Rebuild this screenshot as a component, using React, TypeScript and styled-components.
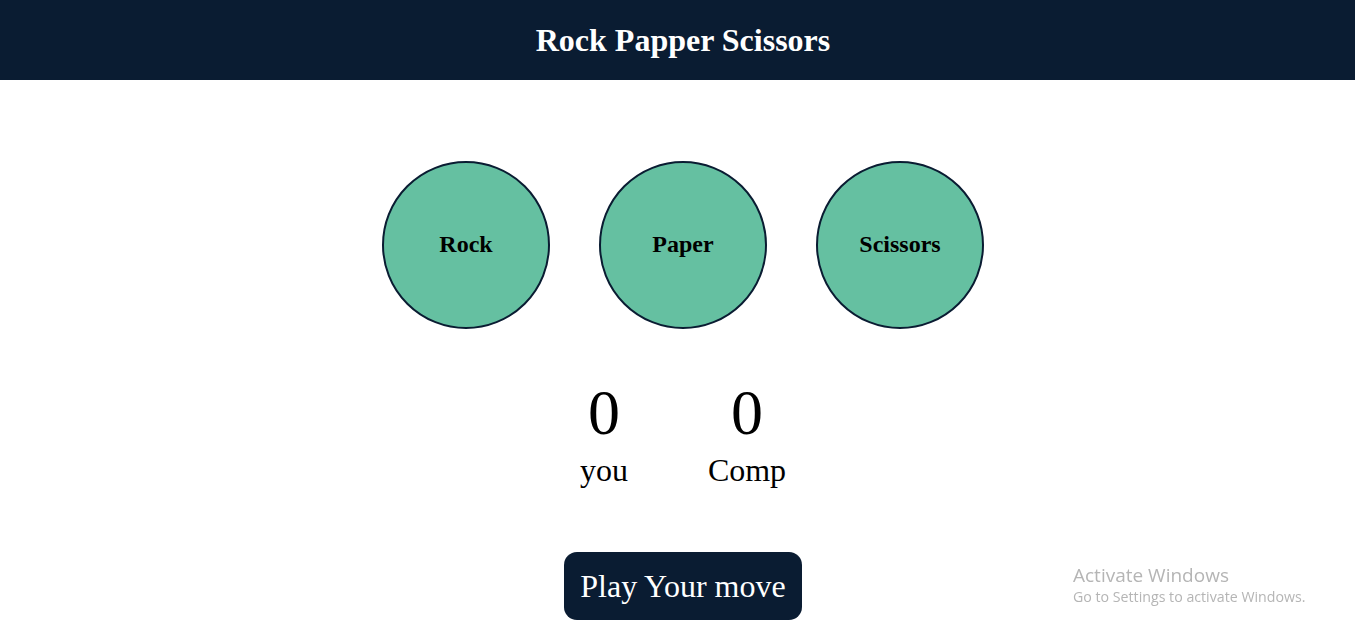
import React from "react";
import styled, { createGlobalStyle } from "styled-components";

const GlobalStyle = createGlobalStyle`
  html, body {
    margin: 0;
    padding: 0;
    overflow: hidden;
    background: #ffffff;
    font-family: "Liberation Serif", "Times New Roman", serif;
  }
  #root {
    width: 1366px;
  }
`;

const Page = styled.div`
  display: flex;
  flex-direction: column;
  align-items: center;
  min-height: 635px;
`;

const Header = styled.header`
  align-self: stretch;
  height: 80px;
  background: #0a1c32;
  display: flex;
  align-items: center;
  justify-content: center;
`;

const Title = styled.h1`
  margin: 0;
  color: #ffffff;
  font-size: 32px;
  font-weight: 700;
`;

const Choices = styled.div`
  display: flex;
  gap: 49px;
  margin-top: 81px;
`;

const Choice = styled.div`
  width: 164px;
  height: 162px;
  padding-bottom: 2px;
  border-radius: 50%;
  border: 2px solid #0a1c32;
  background: #65c0a1;
  display: flex;
  align-items: center;
  justify-content: center;
  font-size: 24px;
  line-height: 26px;
  font-weight: 700;
  color: #000000;
  cursor: pointer;
`;

const ScoreBoard = styled.div`
  display: flex;
  gap: 80px;
  margin-top: 48px;
`;

const Score = styled.div`
  display: flex;
  flex-direction: column;
  align-items: center;
  text-align: center;
`;

const ScoreValue = styled.p`
  margin: 0;
  font-size: 64px;
  line-height: 71px;
`;

const ScoreLabel = styled.p`
  margin: 4px 0 0;
  font-size: 32px;
  line-height: 36px;
`;

const MoveButton = styled.div`
  margin-top: 64px;
  background: #0a1c32;
  color: #ffffff;
  border-radius: 13px;
  padding: 16px 16px;
  font-size: 32px;
  line-height: 36px;
`;

const Watermark = styled.div`
  position: fixed;
  left: 1073px;
  top: 563px;
  font-family: "Open Sans", "Noto Sans", sans-serif;
  color: #b5b5b5;
  pointer-events: none;
`;

const WatermarkTitle = styled.div`
  font-size: 19px;
  line-height: 24px;
`;

const WatermarkText = styled.div`
  font-size: 14.2px;
  line-height: 20px;
`;

export default function App() {
  const choices = ["Rock", "Paper", "Scissors"];
  return (
    <>
      <GlobalStyle />
      <Page>
        <Header>
          <Title>Rock Papper Scissors</Title>
        </Header>
        <Choices>
          {choices.map((c) => (
            <Choice key={c}>{c}</Choice>
          ))}
        </Choices>
        <ScoreBoard>
          <Score>
            <ScoreValue>0</ScoreValue>
            <ScoreLabel>you</ScoreLabel>
          </Score>
          <Score>
            <ScoreValue>0</ScoreValue>
            <ScoreLabel>Comp</ScoreLabel>
          </Score>
        </ScoreBoard>
        <MoveButton>Play Your move</MoveButton>
      </Page>
      <Watermark>
        <WatermarkTitle>Activate Windows</WatermarkTitle>
        <WatermarkText>Go to Settings to activate Windows.</WatermarkText>
      </Watermark>
    </>
  );
}
